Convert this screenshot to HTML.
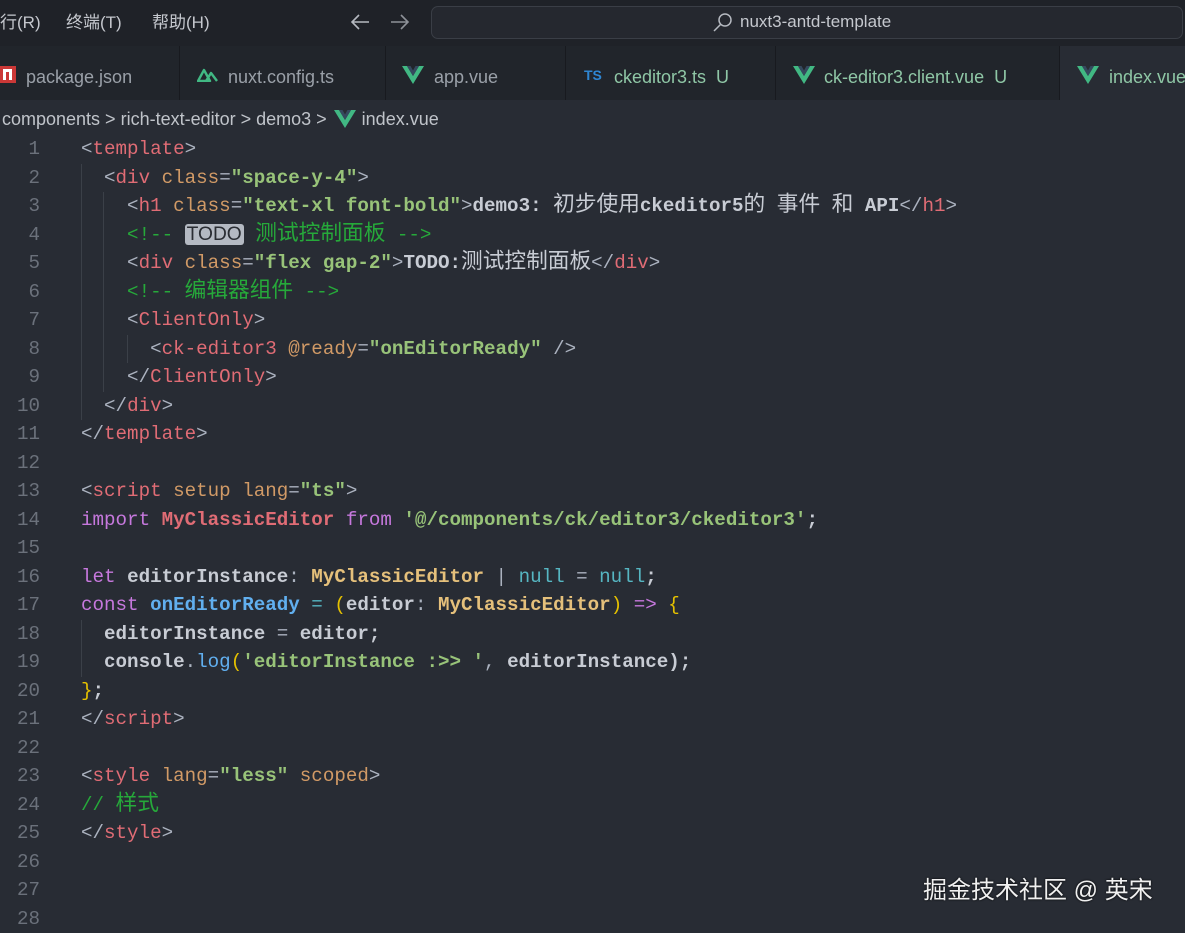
<!DOCTYPE html>
<html><head><meta charset="utf-8"><style>
*{margin:0;padding:0;box-sizing:border-box}
body{width:1185px;height:926px;overflow:hidden;background:#282c34;font-family:"Liberation Sans","Noto Sans CJK SC",sans-serif;position:relative}
.title{position:absolute;left:0;top:0;width:1185px;height:46px;background:#1f2228;color:#c5c8ce;font-size:17px}
.title span{position:absolute;top:8px}
.search{position:absolute;left:431px;top:6px;width:752px;height:33px;border:1px solid #3a3e46;border-radius:7px;background:#25282f}
.tabs{position:absolute;left:0;top:46px;width:1185px;height:54px;background:#21252b}
.tab{position:absolute;top:0;height:54px;border-right:1px solid #181a1f;color:#9aa0a8;font-size:18px}
.tab .t{position:absolute;top:21px}
.crumb{position:absolute;top:109px;left:2px;color:#c0c4ca;font-size:18px}
.code{position:absolute;left:0;top:135px;font-family:"Liberation Mono","Noto Sans CJK SC",monospace;font-size:19.2px;}
.ln{position:absolute;width:40px;text-align:right;color:#6b717b;left:0;height:28.5px;line-height:28.5px}
.l{position:absolute;left:81px;white-space:pre;height:28.5px;line-height:28.5px;color:#abb2bf}
.cj{font-size:21.7px;font-weight:normal}
.p{color:#abb2bf}.tg{color:#e06c75}.at{color:#d19a66}.s{color:#98c379;font-weight:bold}.c{color:#26a93a}.k{color:#c678dd}.d{color:#c8ccd4;font-weight:bold}.y{color:#e5c07b;font-weight:bold}.f{color:#61afef;font-weight:bold}.n{color:#56b6c2}.v{color:#e06c75;font-weight:bold}.br{color:#e5c100}
.todo{background:#b4b9c2;color:#2a2d33;border-radius:3px;font-family:"Liberation Sans",sans-serif;padding:0 2px}
.g{position:absolute;width:1px;background:#3b4048}
.wm{position:absolute;left:923px;top:870px;color:#f0f0f0;font-size:24px;text-shadow:0 0 2px #000}
</style></head><body>
<div class="title">
<span style="left:0">行(R)</span><span style="left:66px">终端(T)</span><span style="left:152px">帮助(H)</span>
<svg style="position:absolute;left:349px;top:12px" width="22" height="20"><path d="M20 10H3M10 3L3 10L10 17" stroke="#b5b9c0" stroke-width="1.6" fill="none"/></svg>
<svg style="position:absolute;left:389px;top:12px" width="22" height="20"><path d="M2 10H19M12 3L19 10L12 17" stroke="#8d9198" stroke-width="1.6" fill="none"/></svg>
<div class="search"></div>
<svg style="position:absolute;left:712px;top:12px" width="22" height="22"><circle cx="13" cy="8" r="6" stroke="#b5b9c0" stroke-width="1.5" fill="none"/><path d="M9 12L2 19" stroke="#b5b9c0" stroke-width="1.5"/></svg>
<span style="left:740px;top:12px;color:#c5c8ce">nuxt3-antd-template</span>
</div>
<div class="tabs">
<div class="tab" style="left:0;width:180px"><div style="position:absolute;left:0;top:20px;width:16px;height:17px;background:#cb3837"></div><div style="position:absolute;left:3px;top:23px;width:9px;height:11px;border:3px solid #fff;border-bottom:none"></div><span class="t" style="left:26px">package.json</span></div>
<div class="tab" style="left:180px;width:206px"><svg style="position:absolute;left:17px;top:20px" width="22" height="16"><path d="M1 15L7 4L13 15ZM9 15L14 7L20 15" stroke="#41b883" stroke-width="2.4" fill="none" stroke-linejoin="round"/></svg><span class="t" style="left:48px">nuxt.config.ts</span></div>
<div class="tab" style="left:386px;width:180px"><svg style="position:absolute;left:16px;top:20px" width="22" height="18"><path d="M0 0H5L11 10L17 0H22L11 18Z" fill="#41b883"/><path d="M5 0H8.5L11 4.5L13.5 0H17L11 10Z" fill="#35495e"/></svg><span class="t" style="left:48px">app.vue</span></div>
<div class="tab" style="left:566px;width:210px"><span style="position:absolute;left:18px;top:21px;color:#2f86d2;font-weight:bold;font-size:14px">TS</span><span class="t" style="left:48px;color:#8fc7a6">ckeditor3.ts&nbsp; U</span></div>
<div class="tab" style="left:776px;width:284px"><svg style="position:absolute;left:17px;top:20px" width="22" height="18"><path d="M0 0H5L11 10L17 0H22L11 18Z" fill="#41b883"/><path d="M5 0H8.5L11 4.5L13.5 0H17L11 10Z" fill="#35495e"/></svg><span class="t" style="left:48px;color:#8fc7a6">ck-editor3.client.vue&nbsp; U</span></div>
<div class="tab" style="left:1060px;width:125px;background:#282c34;border:none"><svg style="position:absolute;left:17px;top:20px" width="22" height="18"><path d="M0 0H5L11 10L17 0H22L11 18Z" fill="#41b883"/><path d="M5 0H8.5L11 4.5L13.5 0H17L11 10Z" fill="#35495e"/></svg><span class="t" style="left:49px;color:#8fc7a6">index.vue</span></div>
</div>
<div class="crumb">components &gt; rich-text-editor &gt; demo3 &gt; <svg style="vertical-align:-3px;margin:0 6px 0 2px" width="22" height="18"><path d="M0 0H5L11 10L17 0H22L11 18Z" fill="#41b883"/><path d="M5 0H8.5L11 4.5L13.5 0H17L11 10Z" fill="#35495e"/></svg>index.vue</div>
<div class="g" style="left:81px;top:164px;height:256px"></div>
<div class="g" style="left:103px;top:192px;height:200px"></div>
<div class="g" style="left:127px;top:335px;height:28px"></div>
<div class="g" style="left:81px;top:620px;height:57px"></div>
<div class="code">
<div class="ln" style="top:0">1</div><div class="l" style="top:0"><span class="p">&lt;</span><span class="tg">template</span><span class="p">&gt;</span></div>
<div class="ln" style="top:28.5px">2</div><div class="l" style="top:28.5px">  &lt;<span class="tg">div</span> <span class="at">class</span>=<span class="s">"space-y-4"</span>&gt;</div>
<div class="ln" style="top:57px">3</div><div class="l" style="top:57px">    &lt;<span class="tg">h1</span> <span class="at">class</span>=<span class="s">"text-xl font-bold"</span>&gt;<span class="d">demo3: <span class="cj">初步使用</span>ckeditor5<span class="cj">的</span> <span class="cj">事件</span> <span class="cj">和</span> API</span>&lt;/<span class="tg">h1</span>&gt;</div>
<div class="ln" style="top:85.5px">4</div><div class="l" style="top:85.5px"><span class="c">    &lt;!-- <span class="todo">TODO</span> <span class="cj">测试控制面板</span> --&gt;</span></div>
<div class="ln" style="top:114px">5</div><div class="l" style="top:114px">    &lt;<span class="tg">div</span> <span class="at">class</span>=<span class="s">"flex gap-2"</span>&gt;<span class="d">TODO:<span class="cj">测试控制面板</span></span>&lt;/<span class="tg">div</span>&gt;</div>
<div class="ln" style="top:142.5px">6</div><div class="l" style="top:142.5px"><span class="c">    &lt;!-- <span class="cj">编辑器组件</span> --&gt;</span></div>
<div class="ln" style="top:171px">7</div><div class="l" style="top:171px">    &lt;<span class="tg">ClientOnly</span>&gt;</div>
<div class="ln" style="top:199.5px">8</div><div class="l" style="top:199.5px">      &lt;<span class="tg">ck-editor3</span> <span class="at">@ready</span>=<span class="s">"onEditorReady"</span> /&gt;</div>
<div class="ln" style="top:228px">9</div><div class="l" style="top:228px">    &lt;/<span class="tg">ClientOnly</span>&gt;</div>
<div class="ln" style="top:256.5px">10</div><div class="l" style="top:256.5px">  &lt;/<span class="tg">div</span>&gt;</div>
<div class="ln" style="top:285px">11</div><div class="l" style="top:285px">&lt;/<span class="tg">template</span>&gt;</div>
<div class="ln" style="top:313.5px">12</div>
<div class="ln" style="top:342px">13</div><div class="l" style="top:342px">&lt;<span class="tg">script</span> <span class="at">setup</span> <span class="at">lang</span>=<span class="s">"ts"</span>&gt;</div>
<div class="ln" style="top:370.5px">14</div><div class="l" style="top:370.5px"><span class="k">import</span> <span class="v">MyClassicEditor</span> <span class="k">from</span> <span class="s">'@/components/ck/editor3/ckeditor3'</span><span class="d">;</span></div>
<div class="ln" style="top:399px">15</div>
<div class="ln" style="top:427.5px">16</div><div class="l" style="top:427.5px"><span class="k">let</span> <span class="d">editorInstance</span>: <span class="y">MyClassicEditor</span> <span class="p">|</span> <span class="n">null</span> = <span class="n">null</span><span class="d">;</span></div>
<div class="ln" style="top:456px">17</div><div class="l" style="top:456px"><span class="k">const</span> <span class="f">onEditorReady</span> <span class="n">=</span> <span class="br">(</span><span class="d">editor</span>: <span class="y">MyClassicEditor</span><span class="br">)</span> <span class="k">=&gt;</span> <span class="br">{</span></div>
<div class="ln" style="top:484.5px">18</div><div class="l" style="top:484.5px">  <span class="d">editorInstance</span> = <span class="d">editor;</span></div>
<div class="ln" style="top:513px">19</div><div class="l" style="top:513px">  <span class="d">console</span>.<span class="f" style="font-weight:normal">log</span><span class="br">(</span><span class="s">'editorInstance :&gt;&gt; '</span>, <span class="d">editorInstance);</span></div>
<div class="ln" style="top:541.5px">20</div><div class="l" style="top:541.5px"><span class="br">}</span><span class="d">;</span></div>
<div class="ln" style="top:570px">21</div><div class="l" style="top:570px">&lt;/<span class="tg">script</span>&gt;</div>
<div class="ln" style="top:598.5px">22</div>
<div class="ln" style="top:627px">23</div><div class="l" style="top:627px">&lt;<span class="tg">style</span> <span class="at">lang</span>=<span class="s">"less"</span> <span class="at">scoped</span>&gt;</div>
<div class="ln" style="top:655.5px">24</div><div class="l" style="top:655.5px"><span class="c">// <span class="cj">样式</span></span></div>
<div class="ln" style="top:684px">25</div><div class="l" style="top:684px">&lt;/<span class="tg">style</span>&gt;</div>
<div class="ln" style="top:712.5px">26</div>
<div class="ln" style="top:741px">27</div>
<div class="ln" style="top:769.5px">28</div>
</div>
<div class="wm">掘金技术社区 @ 英宋</div>
</body></html>
